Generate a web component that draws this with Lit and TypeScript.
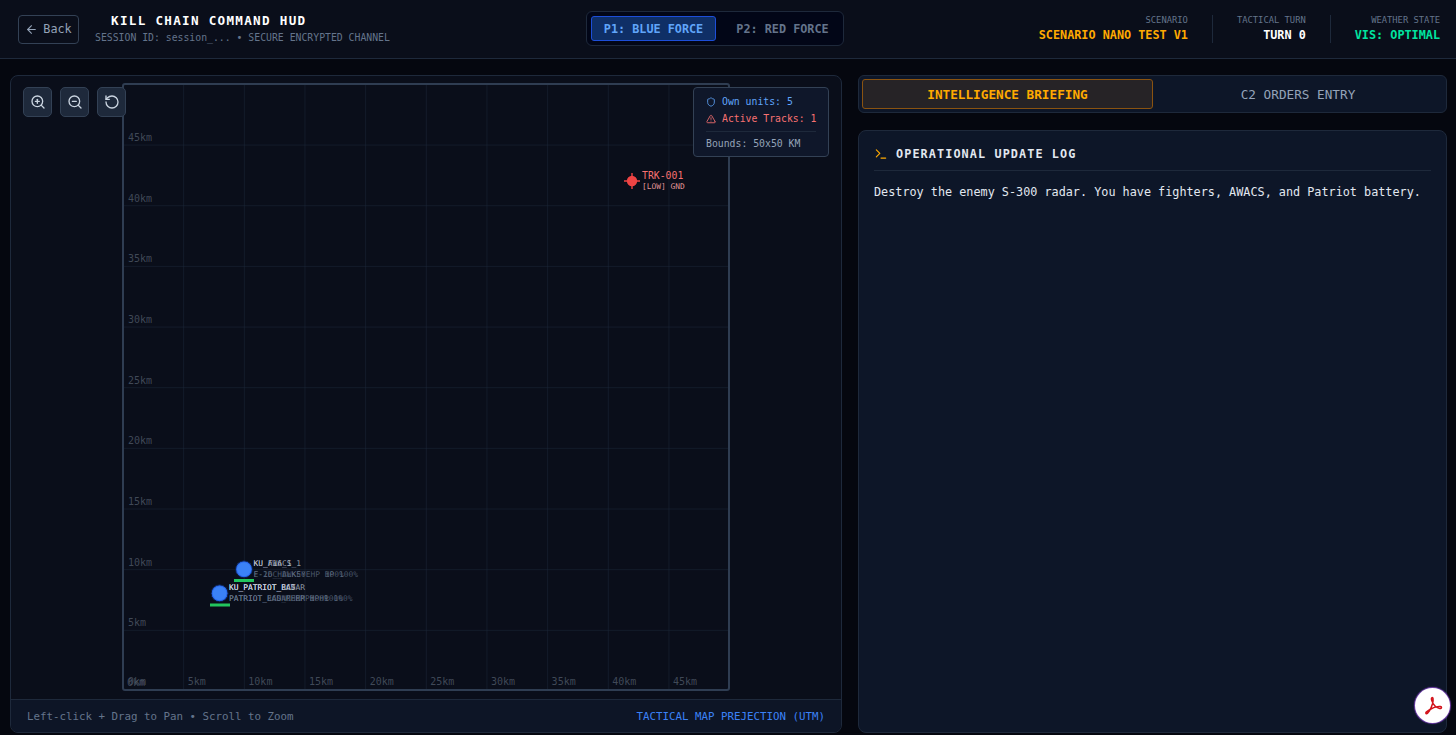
import { LitElement, html, css, svg } from "lit";
import { customElement } from "lit/decorators.js";

const FIRST_LINE_A = ["KU_F16_1", "KU_AWACS_1"];
const SECOND_LINE_A = ["F-16C_BLK50 HP 100%", "E-2D_HAWKEYE\u00a0\u00a0\u00a0HP 100%"];
const FIRST_LINE_B = ["KU_PATRIOT_RADAR", "KU_PATRIOT_ECS", "KU_PATRIOT_BAT"];
const SECOND_LINE_B = ["PATRIOT_RADAR HP 100%", "PATRIOT_ECS_MERMPH HP 100%", "PATRIOT_LAUNCHER HP 100%"];

const icon = (body: unknown, size = 14) => html`<svg class="ic" width=${size} height=${size} viewBox="0 0 24 24" fill="none" stroke="currentColor" stroke-width="2" stroke-linecap="round" stroke-linejoin="round">${body}</svg>`;

@customElement("app-root")
export class AppRoot extends LitElement {
  static styles = css`
    :host { display: block; height: 735px; overflow: hidden; background: #05070f; color: #e2e8f0; font-family: "DejaVu Sans Mono", "Liberation Mono", monospace; }
    * { box-sizing: border-box; }
    .ic { display: block; flex: none; }
    header { height: 59px; background: #0a0e1a; border-bottom: 1px solid #1e293b; display: grid; grid-template-columns: 568px auto 1fr; align-items: center; padding: 0 16px 0 18px; }
    .left { display: flex; align-items: center; gap: 16px; }
    .back { width: 61px; height: 29px; display: flex; align-items: center; justify-content: center; gap: 5px; border: 1px solid #334155; border-radius: 4px; color: #94a3b8; font-size: 11.8px; background: #0a0e1a; }
    .titles { display: flex; flex-direction: column; gap: 4px; margin-top: -1px; }
    .title { font-size: 12.6px; font-weight: 700; letter-spacing: 1.3px; color: #fff; padding-left: 16px; line-height: 15px; margin-top: -1px; }
    .session { font-size: 9.8px; color: #64748b; line-height: 12px; }
    .toggle { display: flex; align-items: center; width: 258px; height: 35px; padding: 4px; background: #020617; border: 1px solid #1e293b; border-radius: 6px; margin-top: -1px; }
    .tgl { flex: none; height: 25px; display: flex; align-items: center; justify-content: center; font-size: 11.8px; font-weight: 700; border-radius: 3px; }
    .tgl.on { width: 125px; background: #0f2f66; border: 1px solid #1d4ed8; color: #60a5fa; }
    .tgl.off { width: 125px; margin-left: 4px; color: #64748b; }
    .stats { display: flex; justify-content: flex-end; align-items: center; }
    .stat { display: flex; flex-direction: column; align-items: flex-end; gap: 2px; padding: 0 0 0 24px; margin-left: 24px; border-left: 1px solid #1e293b; height: 28px; }
    .stat:first-child { border-left: 0; }
    .stat .k { font-size: 8.8px; color: #64748b; line-height: 11px; }
    .stat .v { font-size: 11.8px; font-weight: 700; line-height: 15px; }
    .amber { color: #ffaa00; } .white { color: #fff; } .green { color: #00e5a0; }
    main { display: flex; gap: 16px; padding: 16px 9px 2px 10px; height: 676px; }
    .map-panel { width: 832px; flex: none; display: flex; flex-direction: column; background: #0a0e1a; border: 1px solid #1e293b; border-radius: 8px; overflow: hidden; }
    .viewport { position: relative; flex: 1; min-height: 0; }
    .viewport > svg { position: absolute; inset: 0; display: block; }
    .bounds { fill: none; stroke: #2f3d52; stroke-width: 2; }
    .grid { stroke: #1e293b; stroke-opacity: .5; stroke-width: 1; }
    .km { font-size: 10px; fill: #4b5563; fill-opacity: .85; font-family: "DejaVu Sans Mono", monospace; }
    .u1 { font-size: 7.9px; fill: #cbd5e1; fill-opacity: .7; font-family: "DejaVu Sans Mono", monospace; }
    .u2 { font-size: 7.9px; fill: #64748b; fill-opacity: .7; font-family: "DejaVu Sans Mono", monospace; }
    .t1 { font-size: 9.8px; fill: #f87171; font-family: "DejaVu Sans Mono", monospace; }
    .t2 { font-size: 7.9px; fill: #fca5a5; fill-opacity: .9; font-family: "DejaVu Sans Mono", monospace; }
    .zooms { position: absolute; left: 12px; top: 11px; display: flex; gap: 8px; }
    .zb { width: 29px; height: 30px; display: flex; align-items: center; justify-content: center; background: #1e293b; border: 1px solid #334155; border-radius: 5px; color: #cbd5e1; }
    .legend { position: absolute; left: 682px; top: 11px; width: 136px; height: 70px; padding: 5px 12px; background: #0f172a; border: 1px solid #334155; border-radius: 4px; font-size: 9.8px; white-space: nowrap; }
    .row { display: flex; align-items: center; gap: 6px; height: 17px; }
    .blue { color: #60a5fa; } .red { color: #f87171; }
    .sep { height: 1px; background: #1e293b; margin: 4px 0 5px; }
    .bounds-t { color: #94a3b8; line-height: 14px; }
    .foot { height: 33px; flex: none; display: flex; justify-content: space-between; align-items: center; padding: 0 16px; background: #0d1526; border-top: 1px solid #1e293b; font-size: 10.8px; color: #64748b; }
    .foot .proj { color: #3b82f6; }
    .right { flex: 1; min-width: 0; display: flex; flex-direction: column; gap: 17px; }
    .tabs { height: 38px; flex: none; display: flex; padding: 3px; background: #0d1628; border: 1px solid #1e293b; border-radius: 6px; }
    .tab { flex: 1; display: flex; align-items: center; justify-content: center; font-size: 12.7px; color: #94a3b8; border-radius: 3px; }
    .tab.on { flex: none; width: 291px; background: #262326; border: 1px solid #8a5310; color: #ffaa00; font-weight: 700; }
    .brief { flex: 1; background: #0d1628; border: 1px solid #1e293b; border-radius: 8px; padding: 15px; position: relative; }
    .brief h2 { margin: 0; height: 25px; display: flex; align-items: flex-start; gap: 8px; font-size: 11.8px; font-weight: 700; letter-spacing: 1.1px; color: #e2e8f0; border-bottom: 1px solid #1e293b; line-height: 16px; }
    .brief h2 .amber { margin-top: 1px; }
    .brief p { margin: 12px 0 0; font-size: 11.8px; line-height: 18px; color: #e2e8f0; white-space: nowrap; }
    .pdf { position: absolute; left: 1415px; top: 688px; width: 35px; height: 35px; border-radius: 50%; background: #fff; display: flex; align-items: center; justify-content: center; box-shadow: 0 0 1px 1px #a855f7aa; }
  `;

  private map() {
    const step = 606.6 / 10;
    const xs = Array.from({ length: 9 }, (_, i) => 123 + step * (i + 1));
    const ys = Array.from({ length: 9 }, (_, i) => 84.4 + step * (i + 1));
    return html`<svg width="830" height="624" viewBox="11 76 830 624">
      ${xs.map((x) => svg`<line class="grid" x1=${x} x2=${x} y1="84" y2="690"></line>`)}
      ${ys.map((y) => svg`<line class="grid" x1="123" x2="729" y1=${y} y2=${y}></line>`)}
      <rect class="bounds" x="123" y="84" width="606" height="606" rx="2"></rect>
      ${ys.map((y, i) => svg`<text class="km" x="128" y=${y - 4}>${(9 - i) * 5}km</text>`)}
      ${xs.map((x, i) => svg`<text class="km" x=${x + 4} y="685">${(i + 1) * 5}km</text>`)}
      <text class="km" x="127" y="686">0km</text><text class="km" x="128" y="685">0km</text>

      <circle cx="244" cy="569.3" r="8.5" fill="#2563eb" stroke="#0b1b3a" stroke-width="1"></circle>
      <circle cx="244" cy="569.3" r="7" fill="#3b82f6"></circle>
      <rect x="234" y="579" width="20" height="3" fill="#22c55e"></rect>
      ${FIRST_LINE_A.map((t) => svg`<text class="u1" x="253.500" y="566">${t}</text>`)}
      ${SECOND_LINE_A.map((t) => svg`<text class="u2" x="253.500" y="576.500">${t}</text>`)}

      <circle cx="219.600" cy="593.300" r="8.500" fill="#2563eb" stroke="#0b1b3a" stroke-width="1"></circle>
      <circle cx="219.600" cy="593.300" r="7" fill="#3b82f6"></circle>
      <rect x="210" y="603.500" width="20" height="3" fill="#22c55e"></rect>
      ${FIRST_LINE_B.map((t) => svg`<text class="u1" x="229" y="590">${t}</text>`)}
      ${SECOND_LINE_B.map((t) => svg`<text class="u2" x="229" y="600.500">${t}</text>`)}

      <g stroke="#ef4444" stroke-width="1.4">
        <line x1="624" x2="640" y1="181" y2="181"></line>
        <line x1="632" x2="632" y1="173" y2="189"></line>
      </g>
      <circle cx="632" cy="181" r="5.2" fill="#ef4444"></circle>
      <text class="t1" x="642" y="178.5">TRK-001</text>
      <text class="t2" x="642" y="188.5">[LOW] GND</text>
    </svg>`;
  }

  render() {
    return html`
      <header>
        <div class="left">
          <div class="back">${icon(svg`<path d="m12 19-7-7 7-7"></path><path d="M19 12H5"></path>`, 13)}<span>Back</span></div>
          <div class="titles">
            <div class="title">KILL CHAIN COMMAND HUD</div>
            <div class="session">SESSION ID: session_... • SECURE ENCRYPTED CHANNEL</div>
          </div>
        </div>
        <div class="toggle">
          <div class="tgl on">P1: BLUE FORCE</div>
          <div class="tgl off">P2: RED FORCE</div>
        </div>
        <div class="stats">
          <div class="stat"><span class="k">SCENARIO</span><span class="v amber">SCENARIO NANO TEST V1</span></div>
          <div class="stat"><span class="k">TACTICAL TURN</span><span class="v white">TURN 0</span></div>
          <div class="stat"><span class="k">WEATHER STATE</span><span class="v green">VIS: OPTIMAL</span></div>
        </div>
      </header>
      <main>
        <section class="map-panel">
          <div class="viewport">
            ${this.map()}
            <div class="zooms">
              <div class="zb">${icon(svg`<circle cx="11" cy="11" r="8"></circle><path d="m21 21-4.3-4.3"></path><path d="M11 8v6"></path><path d="M8 11h6"></path>`, 16)}</div>
              <div class="zb">${icon(svg`<circle cx="11" cy="11" r="8"></circle><path d="m21 21-4.3-4.3"></path><path d="M8 11h6"></path>`, 16)}</div>
              <div class="zb">${icon(svg`<path d="M3 12a9 9 0 1 0 9-9 9.75 9.75 0 0 0-6.74 2.74L3 8"></path><path d="M3 3v5h5"></path>`, 16)}</div>
            </div>
            <div class="legend">
              <div class="row blue">${icon(svg`<path d="M20 13c0 5-3.5 7.5-7.66 8.95a1 1 0 0 1-.67-.01C7.5 20.5 4 18 4 13V6a1 1 0 0 1 1-1c2 0 4.5-1.2 6.24-2.72a1.17 1.17 0 0 1 1.52 0C14.51 3.81 17 5 19 5a1 1 0 0 1 1 1z"></path>`, 10)}<span>Own units: 5</span></div>
              <div class="row red">${icon(svg`<path d="m21.73 18-8-14a2 2 0 0 0-3.48 0l-8 14A2 2 0 0 0 4 21h16a2 2 0 0 0 1.73-3"></path><path d="M12 9v4"></path><path d="M12 17h.01"></path>`, 10)}<span>Active Tracks: 1</span></div>
              <div class="sep"></div>
              <div class="bounds-t">Bounds: 50x50 KM</div>
            </div>
          </div>
          <div class="foot"><span>Left-click + Drag to Pan • Scroll to Zoom</span><span class="proj">TACTICAL MAP PREJECTION (UTM)</span></div>
        </section>
        <section class="right">
          <div class="tabs">
            <div class="tab on">INTELLIGENCE BRIEFING</div>
            <div class="tab">C2 ORDERS ENTRY</div>
          </div>
          <div class="brief">
            <h2><span class="amber">${icon(svg`<path d="m4 17 6-6-6-6"></path><path d="M12 19h8"></path>`, 14)}</span><span>OPERATIONAL UPDATE LOG</span></h2>
            <p>Destroy the enemy S-300 radar. You have fighters, AWACS, and Patriot battery.</p>
          </div>
        </section>
      </main>
      <div class="pdf"><svg width="24" height="24" viewBox="0 0 24 24" fill="none" stroke="#d3121a" stroke-width="1.5" stroke-linejoin="round"><path d="M5 19.5C7 20.5 10 15 11.6 9.5 12.6 5.5 12 3.3 11 3.6 9.8 4 10.600 8.500 14 12c2.300 2.300 6.500 3.500 6.500 1.500 0-2-6.500-1-11.500 2-3 1.800-4.800 3.200-4 4z"></path></svg></div>
    `;
  }
}
